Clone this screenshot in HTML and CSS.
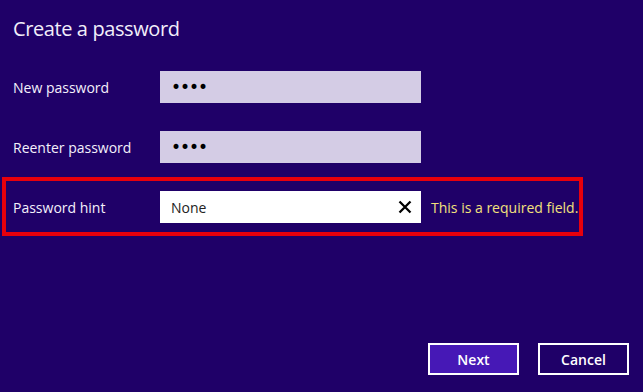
FILE: index.html
```html
<!DOCTYPE html>
<html lang="en">
<head>
<meta charset="utf-8">
<title>Create a password</title>
<link rel="stylesheet" href="styles.css">
</head>
<body>
<div class="page">
  <h1 class="title">Create a password</h1>
  <div class="form">
    <div class="row">
      <label class="label">New password</label>
      <div class="field field-pw"><span class="dots">••••</span></div>
    </div>
    <div class="row">
      <label class="label">Reenter password</label>
      <div class="field field-pw"><span class="dots">••••</span></div>
    </div>
    <div class="row row-error">
      <label class="label">Password hint</label>
      <div class="field field-text">
        <span class="value">None</span>
        <svg class="clear" width="14" height="14" viewBox="0 0 14 14" aria-hidden="true">
          <path d="M1.5 1.5 L12.5 12.5 M12.5 1.5 L1.5 12.5" stroke="#000" stroke-width="2.3" fill="none"/>
        </svg>
      </div>
      <span class="error">This is a required field.</span>
    </div>
  </div>
  <div class="actions">
    <button class="btn btn-primary">Next</button>
    <button class="btn">Cancel</button>
  </div>
</div>
</body>
</html>
```
FILE: styles.css
```css
* { box-sizing: border-box; }
html, body {
  margin: 0;
  padding: 0;
  background: #1f0068;
}
body {
  font-family: "Open Sans", "Noto Sans", sans-serif;
  color: #ffffff;
}
.page {
  height: 392px;
  display: flex;
  flex-direction: column;
  padding-top: 15px;
  padding-bottom: 17px;
}
.title {
  margin: 0 0 14px 13px;
  font-size: 20px;
  font-weight: 400;
  line-height: 28px;
  letter-spacing: -0.4px;
  color: #f2eefa;
}
.form {
  display: flex;
  flex-direction: column;
}
.row {
  display: flex;
  align-items: center;
  padding: 14px 0 14px 13px;
}
.label {
  width: 147px;
  font-size: 14px;
  color: #f4f0fb;
}
.field {
  width: 261px;
  height: 32px;
  display: flex;
  align-items: center;
  padding: 0 11px;
}
.field-pw {
  background: #d4cce5;
}
.dots {
  font-family: "DejaVu Sans", sans-serif;
  font-size: 17px;
  letter-spacing: -1px;
  color: #000;
  line-height: 1;
}
.field-text {
  background: #ffffff;
  justify-content: space-between;
  padding-right: 9px;
}
.value {
  font-size: 14px;
  color: #222;
}
.row-error {
  width: 581px;
  margin-left: 2px;
  border: 4px solid #e8000c;
  padding: 10px 0 9px 7px;
}
.error {
  margin-left: 10px;
  font-size: 14px;
  color: #f3e07c;
  white-space: nowrap;
}
.actions {
  margin-top: auto;
  display: flex;
  justify-content: flex-end;
  gap: 19px;
  padding-right: 14px;
}
.btn {
  width: 91px;
  height: 32px;
  border: 2px solid #ffffff;
  background: transparent;
  color: #ffffff;
  font-family: "Open Sans", "Noto Sans", sans-serif;
  font-size: 14px;
  font-weight: 600;
  padding: 0;
}
.btn-primary {
  background: #4618b6;
}
```
